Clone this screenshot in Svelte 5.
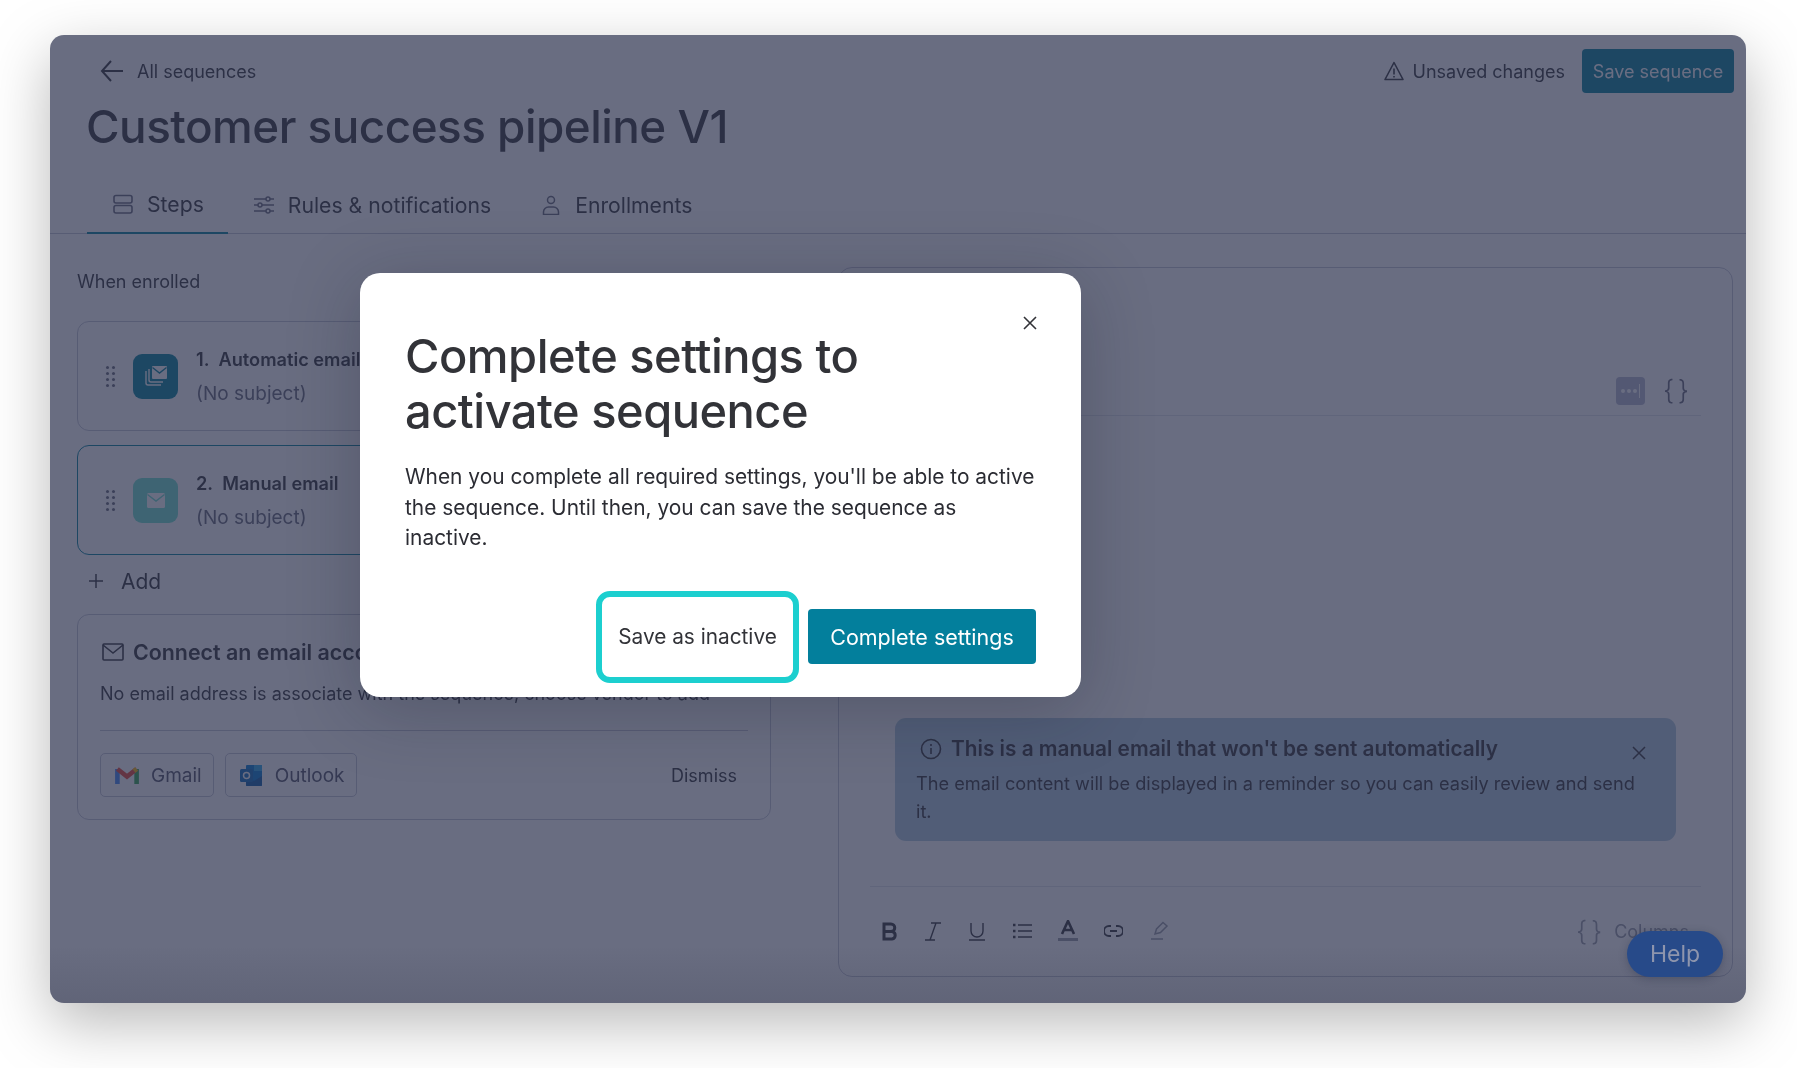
<script>
    // Sequence editor behind a dimmed "complete settings" dialog
    let steps = [
        { num: '1.', title: 'Automatic email', kind: 'auto' },
        { num: '2.', title: 'Manual email', kind: 'manual' }
    ];
</script>

<div class="page">
    <div class="window">

        <!-- TOP BAR -->
        <header class="topbar">
            <div class="back">
                <svg width="24" height="24" viewBox="0 0 24 24" fill="none" stroke="#323338" stroke-width="2"><path d="M23 12H2M11 2L2 12l9 10" /></svg>
                <span>All sequences</span>
            </div>
            <div class="top-right">
                <svg width="20" height="20" viewBox="0 0 20 20" fill="none" stroke="#323338" stroke-width="1.6" stroke-linejoin="round"><path d="M10 1.5L1 18.5h18z" /><path d="M10 7.5v6M10 15v1.5" /></svg>
                <span class="unsaved">Unsaved changes</span>
                <button class="save">Save sequence</button>
            </div>
        </header>

        <h1>Customer success pipeline V1</h1>

        <!-- TABS -->
        <nav class="tabs">
            <div class="tab active">
                <svg width="20" height="20" viewBox="0 0 20 20" fill="none" stroke="#676879" stroke-width="1.6"><rect x="1" y="1.5" width="18" height="7.5" rx="2" /><rect x="1" y="11.5" width="18" height="7.5" rx="2" /></svg>
                <span>Steps</span>
            </div>
            <div class="tab">
                <svg width="20" height="20" viewBox="0 0 20 20" fill="none" stroke="#676879" stroke-width="1.5"><path d="M0 4h12M16 4h4M0 10h4M8 10h12M0 16h12M16 16h4" /><circle cx="14" cy="4" r="2" /><circle cx="6" cy="10" r="2" /><circle cx="14" cy="16" r="2" /></svg>
                <span>Rules &amp; notifications</span>
            </div>
            <div class="tab">
                <svg width="20" height="20" viewBox="0 0 20 20" fill="none" stroke="#676879" stroke-width="1.5"><circle cx="10" cy="5" r="3.5" /><path d="M2.5 19.5v-2.5a5 5 0 0 1 5-5h5a5 5 0 0 1 5 5v2.5z" /></svg>
                <span>Enrollments</span>
            </div>
        </nav>

        <div class="columns">

            <!-- LEFT COLUMN: steps -->
            <section class="left">
                <p class="when">When enrolled</p>

                {#each steps as step}
                    <div class="step" class:selected={step.kind === 'manual'}>
                        <div class="handle">
                            {#each Array(8) as _}<i></i>{/each}
                        </div>
                        <div class="step-icon {step.kind}">
                            {#if step.kind === 'auto'}
                                <svg width="24" height="22" viewBox="0 0 24 22" fill="none" stroke="#fff" stroke-width="1.4"><path d="M2 6v12a2 2 0 0 0 2 2h13M5 4v11a2 2 0 0 0 2 2h12" /><rect x="8" y="1" width="15" height="13" fill="#fff" stroke="none" rx="1" /><path d="M8.5 2.5L15.5 8l7-5.5" stroke="#037f9c" /></svg>
                            {:else}
                                <svg width="18" height="15" viewBox="0 0 18 15"><rect width="18" height="15" rx="1.5" fill="#fff" /><path d="M0.5 1.5L9 8l8.5-6.5" fill="none" stroke="#71dfcf" stroke-width="1.4" /></svg>
                            {/if}
                        </div>
                        <div class="step-text">
                            <strong><span>{step.num}</span>{step.title}</strong>
                            <p>(No subject)</p>
                        </div>
                    </div>
                {/each}

                <div class="add">
                    <svg width="14" height="14" viewBox="0 0 14 14" stroke="#323338" stroke-width="1.5"><path d="M7 0v14M0 7h14" /></svg>
                    <span>Add</span>
                </div>

                <div class="connect">
                    <div class="connect-title">
                        <svg width="22" height="18" viewBox="0 0 22 18" fill="none" stroke="#323338" stroke-width="1.6"><rect x="1" y="1" width="20" height="16" rx="1" /><path d="M1 2l10 8 10-8" /></svg>
                        <strong>Connect an email account</strong>
                    </div>
                    <p class="connect-desc">No email address is associate with the sequence, choose vendor to add</p>
                    <div class="connect-actions">
                        <button class="vendor gmail">
                            <svg width="24" height="18" viewBox="0 0 24 18" fill="none" stroke-width="4.6"><path d="M2.4 18V3" stroke="#4285f4" /><path d="M21.6 18V3" stroke="#34a853" /><path d="M2.4 3L12 10.5 21.6 3" stroke="#ea4335" /><path d="M21.6 3L19 5" stroke="#fbbc04" /></svg>
                            Gmail
                        </button>
                        <button class="vendor outlook">
                            <svg width="23" height="23" viewBox="0 0 23 23"><rect x="6" y="1" width="16" height="21" rx="1" fill="#0078d4" /><path d="M6 12l8 5 8-5v9a1 1 0 0 1-1 1H7a1 1 0 0 1-1-1z" fill="#0a5ca8" /><rect x="14" y="1" width="8" height="6" fill="#28a8ea" /><rect x="0" y="5" width="13" height="13" rx="1.5" fill="#0f6cbd" /><circle cx="6.5" cy="11.5" r="3" fill="none" stroke="#fff" stroke-width="1.5" /></svg>
                            Outlook
                        </button>
                        <span class="dismiss">Dismiss</span>
                    </div>
                </div>
            </section>

            <!-- RIGHT COLUMN: email editor -->
            <section class="editor">
                <div class="editor-top">
                    <div class="snippet">
                        <i></i><i></i><i></i><b></b>
                    </div>
                    <span class="braces">{'{ }'}</span>
                </div>

                <div class="notice">
                    <div class="notice-title">
                        <svg width="22" height="22" viewBox="0 0 22 22" fill="none" stroke="#323338" stroke-width="1.6"><circle cx="11" cy="11" r="9.5" /><path d="M11 10v6M11 6v2" /></svg>
                        <strong>This is a manual email that won't be sent automatically</strong>
                        <svg class="notice-close" width="14" height="14" viewBox="0 0 14 14" stroke="#323338" stroke-width="1.5"><path d="M1 1l12 12M13 1L1 13" /></svg>
                    </div>
                    <p>The email content will be displayed in a reminder so you can easily review and send it.</p>
                </div>

                <div class="toolbar">
                    <svg width="16" height="19" viewBox="0 0 16 19" fill="none" stroke="#323338" stroke-width="3"><path d="M2 2h7a3.5 3.5 0 0 1 0 7.5H2zM2 9.5h8a3.8 3.8 0 0 1 0 7.5H2z" /></svg>
                    <svg width="18" height="19" viewBox="0 0 18 19" fill="none" stroke="#323338" stroke-width="1.4"><path d="M7 1h10M1 18h10M12 1L6 18" /></svg>
                    <svg width="18" height="19" viewBox="0 0 18 19" fill="none" stroke="#323338" stroke-width="1.4"><path d="M3 1v8a6 6 0 0 0 12 0V1M1 18h16" /></svg>
                    <svg width="20" height="16" viewBox="0 0 20 16" fill="none" stroke="#323338" stroke-width="1.5"><path d="M6 2h14M6 8h14M6 14h14" /><path d="M1 2h2.5M1 8h2.5M1 14h2.5" stroke-width="2.5" /></svg>
                    <svg width="20" height="22" viewBox="0 0 20 22" fill="none"><path d="M4 14L10 1l6 13M6 10h8" stroke="#323338" stroke-width="2.6" /><rect y="18" width="20" height="3" fill="#9699a6" /></svg>
                    <svg width="19" height="12" viewBox="0 0 19 12" fill="none" stroke="#323338" stroke-width="1.8"><path d="M7 1H5a5 5 0 0 0 0 10h2M12 1h2a5 5 0 0 1 0 10h-2M6 6h7" /></svg>
                    <svg width="20" height="20" viewBox="0 0 20 20" fill="none" stroke="#9699a6" stroke-width="1.5"><path d="M6 13l1.5-5L14 1.5 18 5l-6.5 6.5zM2 18h12" /></svg>
                    <div class="columns-link">
                        <span class="braces">{'{ }'}</span>
                        <span>Columns</span>
                    </div>
                </div>
            </section>
        </div>

        <!-- DIM LAYER AND DIALOG -->
        <div class="overlay"></div>

        <div class="help">Help</div>

        <div class="modal">
            <svg class="close" width="14" height="14" viewBox="0 0 14 14" stroke="#323338" stroke-width="1.6"><path d="M1 1l12 12M13 1L1 13" /></svg>
            <h2>Complete settings to activate sequence</h2>
            <p>When you complete all required settings, you'll be able to active the sequence. Until then, you can save the sequence as inactive.</p>
            <div class="modal-actions">
                <button class="inactive">Save as inactive</button>
                <button class="complete">Complete settings</button>
            </div>
        </div>
    </div>
</div>

<style>
    :global(body) {
        margin: 0;
        background: #fff;
    }

    .page {
        width: 1797px;
        height: 1068px;
        padding: 35px 51px 65px 50px;
        box-sizing: border-box;
        font-family: "Inter", "Liberation Sans", sans-serif;
        color: #323338;
        filter: drop-shadow(0 20px 30px rgba(0, 0, 0, 0.28));
    }

    .window {
        position: relative;
        height: 100%;
        background: #fff;
        border-radius: 14px;
        overflow: hidden;
    }

    /* ===== HEADER ===== */
    .topbar {
        display: flex;
        justify-content: space-between;
        align-items: center;
        height: 44px;
        margin-top: 14px;
        padding: 0 12px 0 50px;
    }

    .back {
        display: flex;
        align-items: center;
        gap: 13px;
        font-size: 18px;
    }

    .top-right {
        display: flex;
        align-items: center;
        font-size: 18px;
    }

    .unsaved { margin: 0 17px 0 9px; }

    .save {
        width: 152px;
        height: 44px;
        border: none;
        border-radius: 4px;
        background: #037f9c;
        color: #fff;
        font: inherit;
    }

    h1 {
        margin: 4px 0 0 36px;
        font-size: 45.8px;
        line-height: 60px;
        font-weight: 500;
        letter-spacing: -0.5px;
    }

    /* ===== TABS ===== */
    .tabs {
        display: flex;
        height: 62px;
        margin-top: 15px;
        padding-left: 37px;
        border-bottom: 1px solid #c3c6d4;
        box-sizing: border-box;
    }

    .tab {
        display: flex;
        align-items: center;
        gap: 14px;
        padding: 4px 24px 0 26px;
        font-size: 21.2px;
        height: 62px;
        box-sizing: border-box;
    }

    .tab.active {
        border-bottom: 2px solid #037f9c;
    }

    /* ===== COLUMNS ===== */
    .columns {
        display: grid;
        grid-template-columns: 694px 895px;
        gap: 67px;
        padding: 33px 13px 0 27px;
    }

    .when {
        margin: 0;
        font-size: 18px;
        line-height: 30px;
    }

    .step {
        display: flex;
        align-items: center;
        height: 110px;
        margin-top: 14px;
        padding-left: 28px;
        border: 1px solid #c3c6d4;
        border-radius: 12px;
        box-sizing: border-box;
    }

    .when + .step { margin-top: 24px; }

    .step.selected { border-color: #037f9c; }

    .handle {
        display: grid;
        grid-template-columns: repeat(2, 3px);
        gap: 3px 3px;
        margin-right: 18px;
    }

    .handle i {
        width: 3px;
        height: 3px;
        border-radius: 50%;
        background: #676879;
    }

    .step-icon {
        display: flex;
        align-items: center;
        justify-content: center;
        width: 45px;
        height: 45px;
        border-radius: 9px;
    }

    .step-icon.auto { background: #037f9c; }
    .step-icon.manual { background: #71dfcf; }

    .step-text { margin-left: 18px; }

    .step-text strong {
        display: block;
        font-size: 18.2px;
        font-weight: 600;
        line-height: 28px;
    }

    .step-text strong span { margin-right: 9px; }

    .step-text p {
        margin: 8px 0 0;
        font-size: 19px;
        line-height: 26px;
        color: #676879;
    }

    .add {
        display: flex;
        align-items: center;
        gap: 18px;
        height: 44px;
        margin-top: 4px;
        padding-left: 12px;
        font-size: 21px;
    }

    .connect {
        margin-top: 11px;
        height: 206px;
        padding: 0 22px;
        border: 1px solid #c3c6d4;
        border-radius: 12px;
        box-sizing: border-box;
    }

    .connect-title {
        display: flex;
        align-items: center;
        gap: 9px;
        height: 30px;
        margin-top: 22px;
        padding-left: 2px;
        font-size: 21.4px;
    }

    .connect-title strong { font-weight: 600; }

    .connect-desc {
        margin: 12px 0 0;
        font-size: 18px;
        line-height: 30px;
        padding-bottom: 21px;
        border-bottom: 1px solid #c3c6d4;
    }

    .connect-actions {
        display: flex;
        align-items: center;
        gap: 11px;
        margin-top: 22px;
    }

    .vendor {
        display: flex;
        align-items: center;
        height: 44px;
        padding: 0 11px 0 14px;
        background: #fff;
        border: 1px solid #c3c6d4;
        border-radius: 5px;
        font: inherit;
        font-size: 19px;
        color: #505264;
        gap: 12px;
    }

    .dismiss {
        margin-left: auto;
        margin-right: 11px;
        font-size: 18px;
    }

    /* ===== EDITOR ===== */
    .editor {
        height: 710px;
        margin-top: 0;
        border: 1px solid #c3c6d4;
        border-radius: 14px;
        box-sizing: border-box;
        padding: 0 31px;
        display: flex;
        flex-direction: column;
    }

    .editor-top {
        display: flex;
        align-items: center;
        justify-content: flex-end;
        gap: 18px;
        height: 40px;
        margin-top: 103px;
        padding: 0 14px 4px 0;
        border-bottom: 1px solid #e1e3ea;
    }

    .snippet {
        display: flex;
        align-items: center;
        justify-content: center;
        gap: 2px;
        width: 29px;
        height: 28px;
        border-radius: 4px;
        background: #b4b7cf;
    }

    .snippet i {
        width: 4px;
        height: 4px;
        border-radius: 50%;
        background: #fff;
    }

    .snippet b {
        width: 1.5px;
        height: 14px;
        background: #fff;
    }

    .braces {
        font-size: 27px;
        font-weight: 300;
        letter-spacing: -2px;
        color: #676879;
    }

    .notice {
        height: 124px;
        margin: 302px 25px 0 25px;
        padding: 15px 37px 0 23px;
        background: #b0c9dc;
        border-radius: 11px;
        box-sizing: border-box;
    }

    .notice-title {
        position: relative;
        display: flex;
        align-items: center;
        gap: 9px;
        height: 32px;
        padding-left: 2px;
        font-size: 20.8px;
    }

    .notice-title strong { font-weight: 600; }

    .notice-close {
        position: absolute;
        right: -7px;
        top: 13px;
    }

    .notice p {
        margin: 4px 0 0 -2px;
        font-size: 18.2px;
        line-height: 28px;
    }

    .toolbar {
        display: flex;
        align-items: center;
        gap: 26px;
        height: 90px;
        margin-top: 45px;
        padding-left: 12px;
        border-top: 1px solid #e1e3ea;
    }

    .columns-link {
        display: flex;
        align-items: center;
        gap: 14px;
        margin-left: auto;
        margin-right: 12px;
        font-size: 18px;
        color: #9699a6;
    }

    .columns-link .braces { color: #9699a6; }

    /* ===== DIM LAYER ===== */
    .overlay {
        position: absolute;
        inset: 0;
        background:
            linear-gradient(to bottom, transparent 94%, rgba(20, 22, 40, 0.1) 100%),
            rgba(41, 47, 76, 0.7);
    }

    .help {
        position: absolute;
        left: 1577px;
        top: 896px;
        width: 96px;
        height: 46px;
        line-height: 46px;
        text-align: center;
        border-radius: 23px;
        background: #274a89;
        color: #8e95ad;
        font-size: 23px;
        box-shadow: 0 2px 8px rgba(30, 35, 60, 0.3);
    }

    /* ===== DIALOG ===== */
    .modal {
        position: absolute;
        left: 310px;
        top: 238px;
        width: 721px;
        height: 424px;
        padding: 55px 42px 0 45px;
        box-sizing: border-box;
        background: #fff;
        border-radius: 20px;
        box-shadow: 0 12px 70px rgba(20, 22, 40, 0.25);
    }

    .close {
        position: absolute;
        right: 44px;
        top: 43px;
    }

    .modal h2 {
        margin: 0;
        max-width: 560px;
        font-size: 47px;
        line-height: 55px;
        font-weight: 500;
        letter-spacing: -0.5px;
    }

    .modal p {
        margin: 24px 0 0;
        font-size: 20.9px;
        line-height: 30.5px;
        color: #2b2c33;
    }

    .modal-actions {
        display: flex;
        justify-content: flex-end;
        align-items: center;
        gap: 9px;
        margin-top: 37px;
        margin-right: 3px;
    }

    .modal button {
        font: inherit;
        font-size: 20.8px;
        cursor: pointer;
    }

    .inactive {
        width: 203px;
        height: 92px;
        background: #fff;
        border: 6px solid #1ccfcf;
        border-radius: 14px;
        color: #323338;
        padding-bottom: 2px;
    }

    .modal .complete {
        width: 228px;
        height: 55px;
        background: #037f9c;
        border: none;
        border-radius: 4px;
        color: #fff;
        font-size: 21.5px;
    }
</style>
